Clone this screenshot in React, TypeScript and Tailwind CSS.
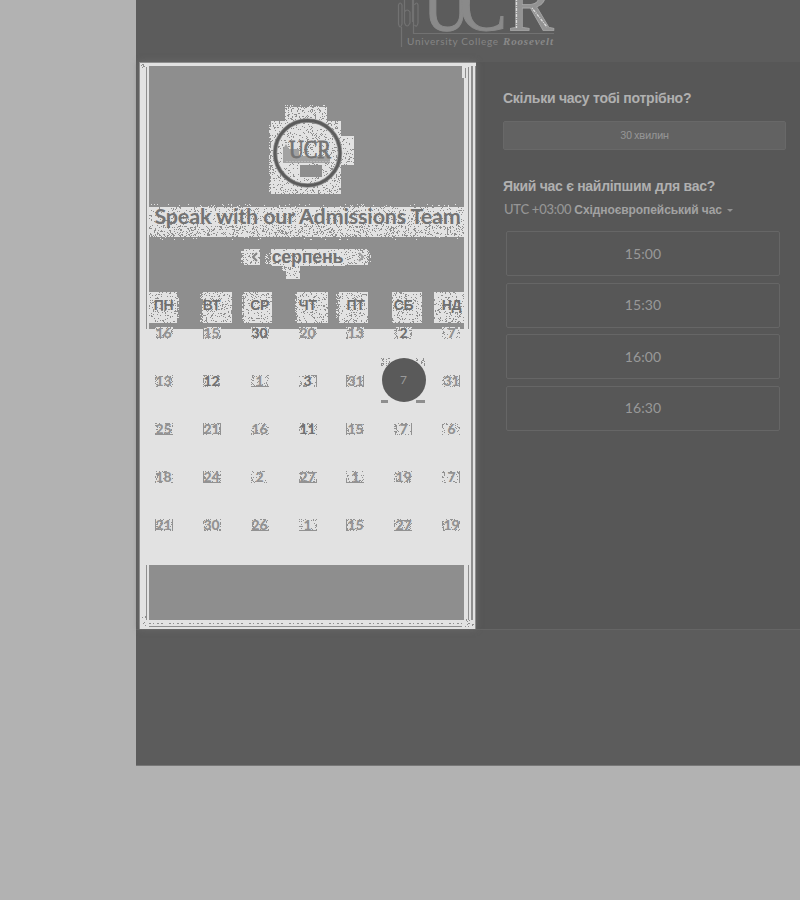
import React from "react";

type Area = [x: number, y: number, w: number, h: number, density: number];

// Builds one path of single-pixel squares scattered over the given areas.
function grain(areas: Area[], seed: number) {
  let s = seed;
  let d = "";
  for (const [x, y, w, h, density] of areas) {
    for (let j = 0; j < h; j++) {
      for (let i = 0; i < w; i++) {
        s = (s * 1664525 + 1013904223) >>> 0;
        if (s / 4294967296 < density) d += `M${x + i} ${y + j}h1v1h-1z`;
      }
    }
  }
  return d;
}

const solid = (areas: Area[]) => areas.map(([x, y, w, h]) => `M${x} ${y}h${w}v${h}h${-w}z`).join("");

const patches: Area[] = [
  [149, 207, 315, 19, 0.12],
  [149, 226, 315, 11, 0.24],
  [285, 107, 42, 14, 0.17],
  [271, 121, 70, 73, 0.15],
  [341, 136, 13, 29, 0.13],
  [244, 249, 16, 16, 0.13],
  [271, 249, 74, 17, 0.08],
  [345, 249, 23, 16, 0.2],
  [286, 266, 14, 13, 0.15],
  [149, 292, 28, 31, 0.16],
  [203, 292, 29, 31, 0.16],
  [244, 292, 28, 31, 0.16],
  [297, 292, 31, 31, 0.16],
  [339, 292, 29, 31, 0.16],
  [392, 292, 30, 31, 0.16],
  [434, 292, 30, 31, 0.16],
];

const fringe: Area[] = [
  [150, 204, 310, 3, 0.06],
  [160, 237, 300, 3, 0.04],
  [269, 125, 3, 69, 0.4],
  [285, 105, 42, 3, 0.3],
  [241, 251, 3, 12, 0.4],
  [265, 253, 6, 12, 0.3],
  [368, 251, 3, 11, 0.4],
  [282, 266, 4, 5, 0.4],
  [200, 292, 3, 31, 0.3],
  [242, 294, 3, 27, 0.35],
  [336, 294, 3, 25, 0.35],
  [177, 294, 2, 25, 0.3],
  [295, 294, 3, 27, 0.4],
];

const weekdays = ["ПН", "ВТ", "СР", "ЧТ", "ПТ", "СБ", "НД"];
const weeks = [
  ["16", "15", "30", "20", "13", "2", "7"],
  ["13", "12", "1", "3", "31", "7", "31"],
  ["25", "21", "16", "11", "15", "7", "6"],
  ["18", "24", "2", "27", "1", "19", "7"],
  ["21", "30", "26", "1", "15", "27", "19"],
];
const dark = new Set(["0-2", "0-5", "1-1", "1-3", "2-3"]);
const underlined = new Set(["1-2", "2-0", "3-1", "3-3", "3-4", "4-2", "4-3", "4-5"]);
const leftEdge = new Set(["0-1", "1-4", "2-1", "2-4", "3-1", "4-0", "4-4"]);
const rightEdge = new Set(["1-3", "1-4", "1-6", "2-1", "2-5", "3-6", "4-0"]);

const cellBase: Area[] = [];
const cellGrain: Area[] = [];
const cellLines: Area[] = [];
weeks.forEach((week, r) =>
  week.forEach((_, c) => {
    if (r === 1 && c === 5) return;
    const x = 155 + c * 48 - (c > 3 ? 1 : 0);
    const y = 327 + r * 48;
    const key = `${r}-${c}`;
    cellBase.push([x, y, 18, 12, 1]);
    // The grain thins out around the digits so they stay readable.
    cellGrain.push([x, y, 3, 12, 0.35], [x + 3, y, 12, 2, 0.3], [x + 3, y + 2, 12, 8, 0.06], [x + 3, y + 10, 12, 2, 0.22], [x + 15, y, 3, 12, 0.25]);
    if (underlined.has(key)) cellLines.push([x, y + 11, 18, 1, 1]);
    if (leftEdge.has(key)) cellLines.push([x, y, 1, 12, 1]);
    if (rightEdge.has(key)) cellLines.push([x + 17, y, 1, 12, 1]);
  })
);

function CardTexture() {
  return (
    <svg className="absolute inset-0" width="337" height="567" viewBox="139 62 337 567" shapeRendering="crispEdges" aria-hidden="true">
      <path fill="#8e8e8e" d="M149 66H464V329H149zM149 565H464V620H149z" />
      <path fill="#8e8e8e" d="M139 62H476V63H139zM139 62H140V629H139zM146 67H147V329H146zM146 565H147V620H146zM471 66H473V620H471zM475 66H476V629H475zM468 66H469V329H468zM468 565H469V620H468zM149 626H462V627H149z" />
      <path fill="#e2e2e2" d="M462 66H471V78H462z" />
      <path fill="#8e8e8e" d="M465 68H466V78H465zM468 67H469V79H468z" />
      <path d="M149 623.5H462" stroke="#8e8e8e" strokeDasharray="2 2 1 3 2 2 2 6" />
      <path fill="#e2e2e2" d={solid(patches)} />
      <path fill="#e2e2e2" d={grain(fringe, 19)} />
      <path fill="#8e8e8e" d={grain(patches, 71)} />
      <path fill="#e2e2e2" d={solid(cellBase)} />
      <path fill="#929292" d={grain(cellGrain, 7) + solid(cellLines)} />
      <path fill="#8e8e8e" d="M381 400H388V403H381zM416 400H425V403H416z" />
      <path fill="#8e8e8e" d={grain([[381, 358, 9, 8, 0.25], [416, 358, 9, 8, 0.25], [141, 64, 6, 4, 0.2], [140, 616, 7, 10, 0.15], [465, 618, 9, 9, 0.15]], 5)} />
    </svg>
  );
}

function SchoolLogo() {
  return (
    <svg className="block" width="170" height="52" viewBox="390 0 170 52">
      <g fill="none" stroke="#727272" strokeWidth="1.2">
        <path d="M398.500 5Q400 1 402 5V24Q400 30 398.500 24zM404.500 0V23Q407 29 410 23V12Q407 8 404.500 12M412.500 0V22M414.500 5Q417 1 418 5V23Q417 28 414.500 25M401.500 27V47M413.500 0V33.500H554" />
      </g>
      <g fontFamily="'Liberation Serif', serif" fontSize="78">
        <text x="423" y="30" fill="#8a8a8a" stroke="#8a8a8a" strokeWidth="1" textLength="47" lengthAdjust="spacingAndGlyphs">U</text>
        <text x="459" y="30" fill="#8a8a8a" stroke="#8a8a8a" strokeWidth="1" textLength="48" lengthAdjust="spacingAndGlyphs">C</text>
        <text x="508" y="30" fill="#939393" stroke="#a8a8a8" strokeWidth=".8" textLength="46" lengthAdjust="spacingAndGlyphs">R</text>
      </g>
      <path d="M516.500 0V28M532 8L547 27" fill="none" stroke="#dcdcdc" strokeWidth="1.3" strokeDasharray="1 1 3 1" />
      <text x="407" y="45" fill="#858585" fontFamily="Lato, sans-serif" fontSize="10" textLength="91">University College</text>
      <text x="503" y="45" fill="#898989" fontFamily="'Liberation Serif', serif" fontSize="11" fontStyle="italic" fontWeight="700" textLength="50">Roosevelt</text>
    </svg>
  );
}

function Avatar() {
  return (
    <svg className="block" width="72" height="72" viewBox="271 118 72 72">
      <path fill="#a2a2a2" d="M283 150l3-5 3 5h10v7h31v7h-47z" />
      <path fill="#8e8e8e" d="M300 166h22v12h-22z" />
      <circle cx="307.500" cy="154" r="32.500" fill="none" stroke="#909090" strokeWidth="4.500" />
      <circle cx="307.500" cy="154" r="32.500" fill="none" stroke="#5c5c5c" strokeWidth="2.800" />
      <text x="289" y="159" fill="#747474" stroke="#747474" strokeWidth=".8" fontFamily="'Liberation Serif', serif" fontSize="25" textLength="42" lengthAdjust="spacingAndGlyphs">UCR</text>
      <path d="M286 162.500H330" stroke="#b8b8b8" strokeDasharray="2 1" />
    </svg>
  );
}

function Chevron({ flip = false }: { flip?: boolean }) {
  return (
    <svg width="6" height="10" viewBox="0 0 6 10" fill="none" stroke={flip ? "#a0a0a0" : "#858585"} strokeWidth="2">
      <path d={flip ? "M1 1l4 4-4 4" : "M5 1L1 5l4 4"} />
    </svg>
  );
}

function Calendar() {
  return (
    <section className="relative h-[567px] w-[337px] shrink-0 bg-[#e2e2e2] shadow-[0_0_6px_#6c6c6c]">
      <CardTexture />
      <div className="relative flex h-full flex-col items-center">
        <div className="mt-[55px] mr-[2px]"><Avatar /></div>
        <h1 className="mt-[13px] h-7 whitespace-nowrap font-[Lato,sans-serif] text-[21.5px] leading-7 font-bold tracking-[-0.16px] text-[#747474]">
          Speak with our Admissions Team
        </h1>
        <div className="mt-[15px] flex h-6 items-center">
          <Chevron />
          <h2 className="mx-[14px] w-[72px] text-center font-['Liberation_Sans',sans-serif] text-[18px] leading-6 font-bold tracking-[-0.3px] text-[#727272]">серпень</h2>
          <Chevron flip />
        </div>
        <div className="mt-6 grid h-6 w-[336px] grid-cols-7 items-center text-center font-['Liberation_Sans',sans-serif] text-[14px] font-bold tracking-[-0.4px] text-[#6f6f6f]">
          {weekdays.map((day) => <span key={day}>{day}</span>)}
        </div>
        <div className="-mt-[9px] grid w-[336px] grid-cols-7 font-[Lato,sans-serif] text-[14px] font-black">
          {weeks.map((week, r) => week.map((day, c) => {
            const selected = r === 1 && c === 5;
            return (
              <div key={`${r}-${c}`} className="flex h-12 items-center justify-center">
                <span className={selected
                  ? "flex size-11 items-center justify-center rounded-full bg-[#5a5a5a] text-[12px] font-normal text-[#999999]"
                  : dark.has(`${r}-${c}`) ? "text-[#717171]" : "text-[#929292]"}>{day}</span>
              </div>
            );
          }))}
        </div>
      </div>
    </section>
  );
}

function TimePicker() {
  return (
    <section className="h-[567px] grow bg-[#575757] pt-[26px] pl-[27px] font-['Liberation_Sans',sans-serif] text-[#b0b0b0]">
      <h3 className="h-5 text-[14px] leading-5 font-bold tracking-[-0.26px] whitespace-nowrap">Скільки часу тобі потрібно?</h3>
      <button className="mt-[13px] block h-[29px] w-[283px] rounded-[2px] border border-[#686868] bg-[#626262] font-[Roboto,sans-serif] text-[11px] leading-4 tracking-[-0.4px] text-[#949494]">30 хвилин</button>
      <h3 className="mt-[26px] h-5 text-[14px] leading-5 font-bold tracking-[-0.29px] whitespace-nowrap">Який час є найліпшим для вас?</h3>
      <div className="mt-[4px] flex h-5 items-center whitespace-nowrap text-[12px] font-bold tracking-[-0.08px] text-[#a2a2a2]">
        <span className="mr-[3px] ml-px font-[Lato,sans-serif] text-[13px] font-medium tracking-[-0.25px] text-[#959595]">UTC +03:00</span>
        <span>Східноєвропейський час</span>
        <span className="ml-[5px] border-x-[3px] border-t-[3px] border-x-transparent border-t-[#929292]" />
      </div>
      <div className="mt-[11px] ml-[3px] flex w-[274px] flex-col gap-[6.500px]">
        {["15:00", "15:30", "16:00", "16:30"].map((time) => (
          <button key={time} className="h-[45px] rounded-[2px] border border-[#666666] pb-px font-[Lato,sans-serif] text-[14px] tracking-[0.1px] text-[#999999]">{time}</button>
        ))}
      </div>
    </section>
  );
}

export default function App() {
  return (
    <div className="h-[900px] w-[800px] overflow-hidden bg-[#b2b2b2] pl-[136px]">
      <main className="h-[766px] border-b border-[#777777] bg-[#5c5c5c]">
        <header className="h-[62px] pl-[254px]"><SchoolLogo /></header>
        <div className="flex border-b border-[#656565] pl-[3px]">
          <Calendar />
          <TimePicker />
        </div>
      </main>
    </div>
  );
}
